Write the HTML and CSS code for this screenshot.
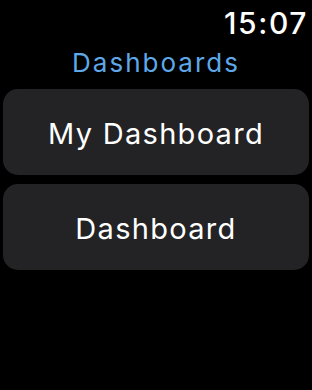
FILE: index.html
```html
<!DOCTYPE html>
<html>
<head>
<meta charset="utf-8">
<link rel="stylesheet" href="styles.css">
</head>
<body>
<div class="screen">
  <div class="status"><span class="time">15:07</span></div>
  <div class="title">Dashboards</div>
  <div class="list">
    <div class="item">My Dashboard</div>
    <div class="item">Dashboard</div>
  </div>
</div>
</body>
</html>
```
FILE: styles.css
```css
html, body {
  margin: 0;
  padding: 0;
  background: #000;
}
.screen {
  width: 312px;
  height: 390px;
  background: #000;
  font-family: Inter, "Noto Sans", sans-serif;
  color: #fff;
  display: flex;
  flex-direction: column;
}
.status {
  display: flex;
  justify-content: flex-end;
  padding: 5px 4px 0 0;
  height: 40px;
  box-sizing: border-box;
}
.time {
  font-size: 30px;
  line-height: 36px;
  font-weight: 500;
  letter-spacing: 1.6px;
}
.title {
  text-align: center;
  color: #5ea8e9;
  font-size: 26px;
  line-height: 46px;
  letter-spacing: 2px;
  height: 49px;
}
.list {
  display: flex;
  flex-direction: column;
  gap: 9px;
  padding: 0 3px;
}
.item {
  height: 86px;
  border-radius: 15px;
  background: #232325;
  display: flex;
  align-items: center;
  justify-content: center;
  font-size: 29px;
  letter-spacing: 1.3px;
  padding-top: 2px;
  box-sizing: border-box;
}
```
